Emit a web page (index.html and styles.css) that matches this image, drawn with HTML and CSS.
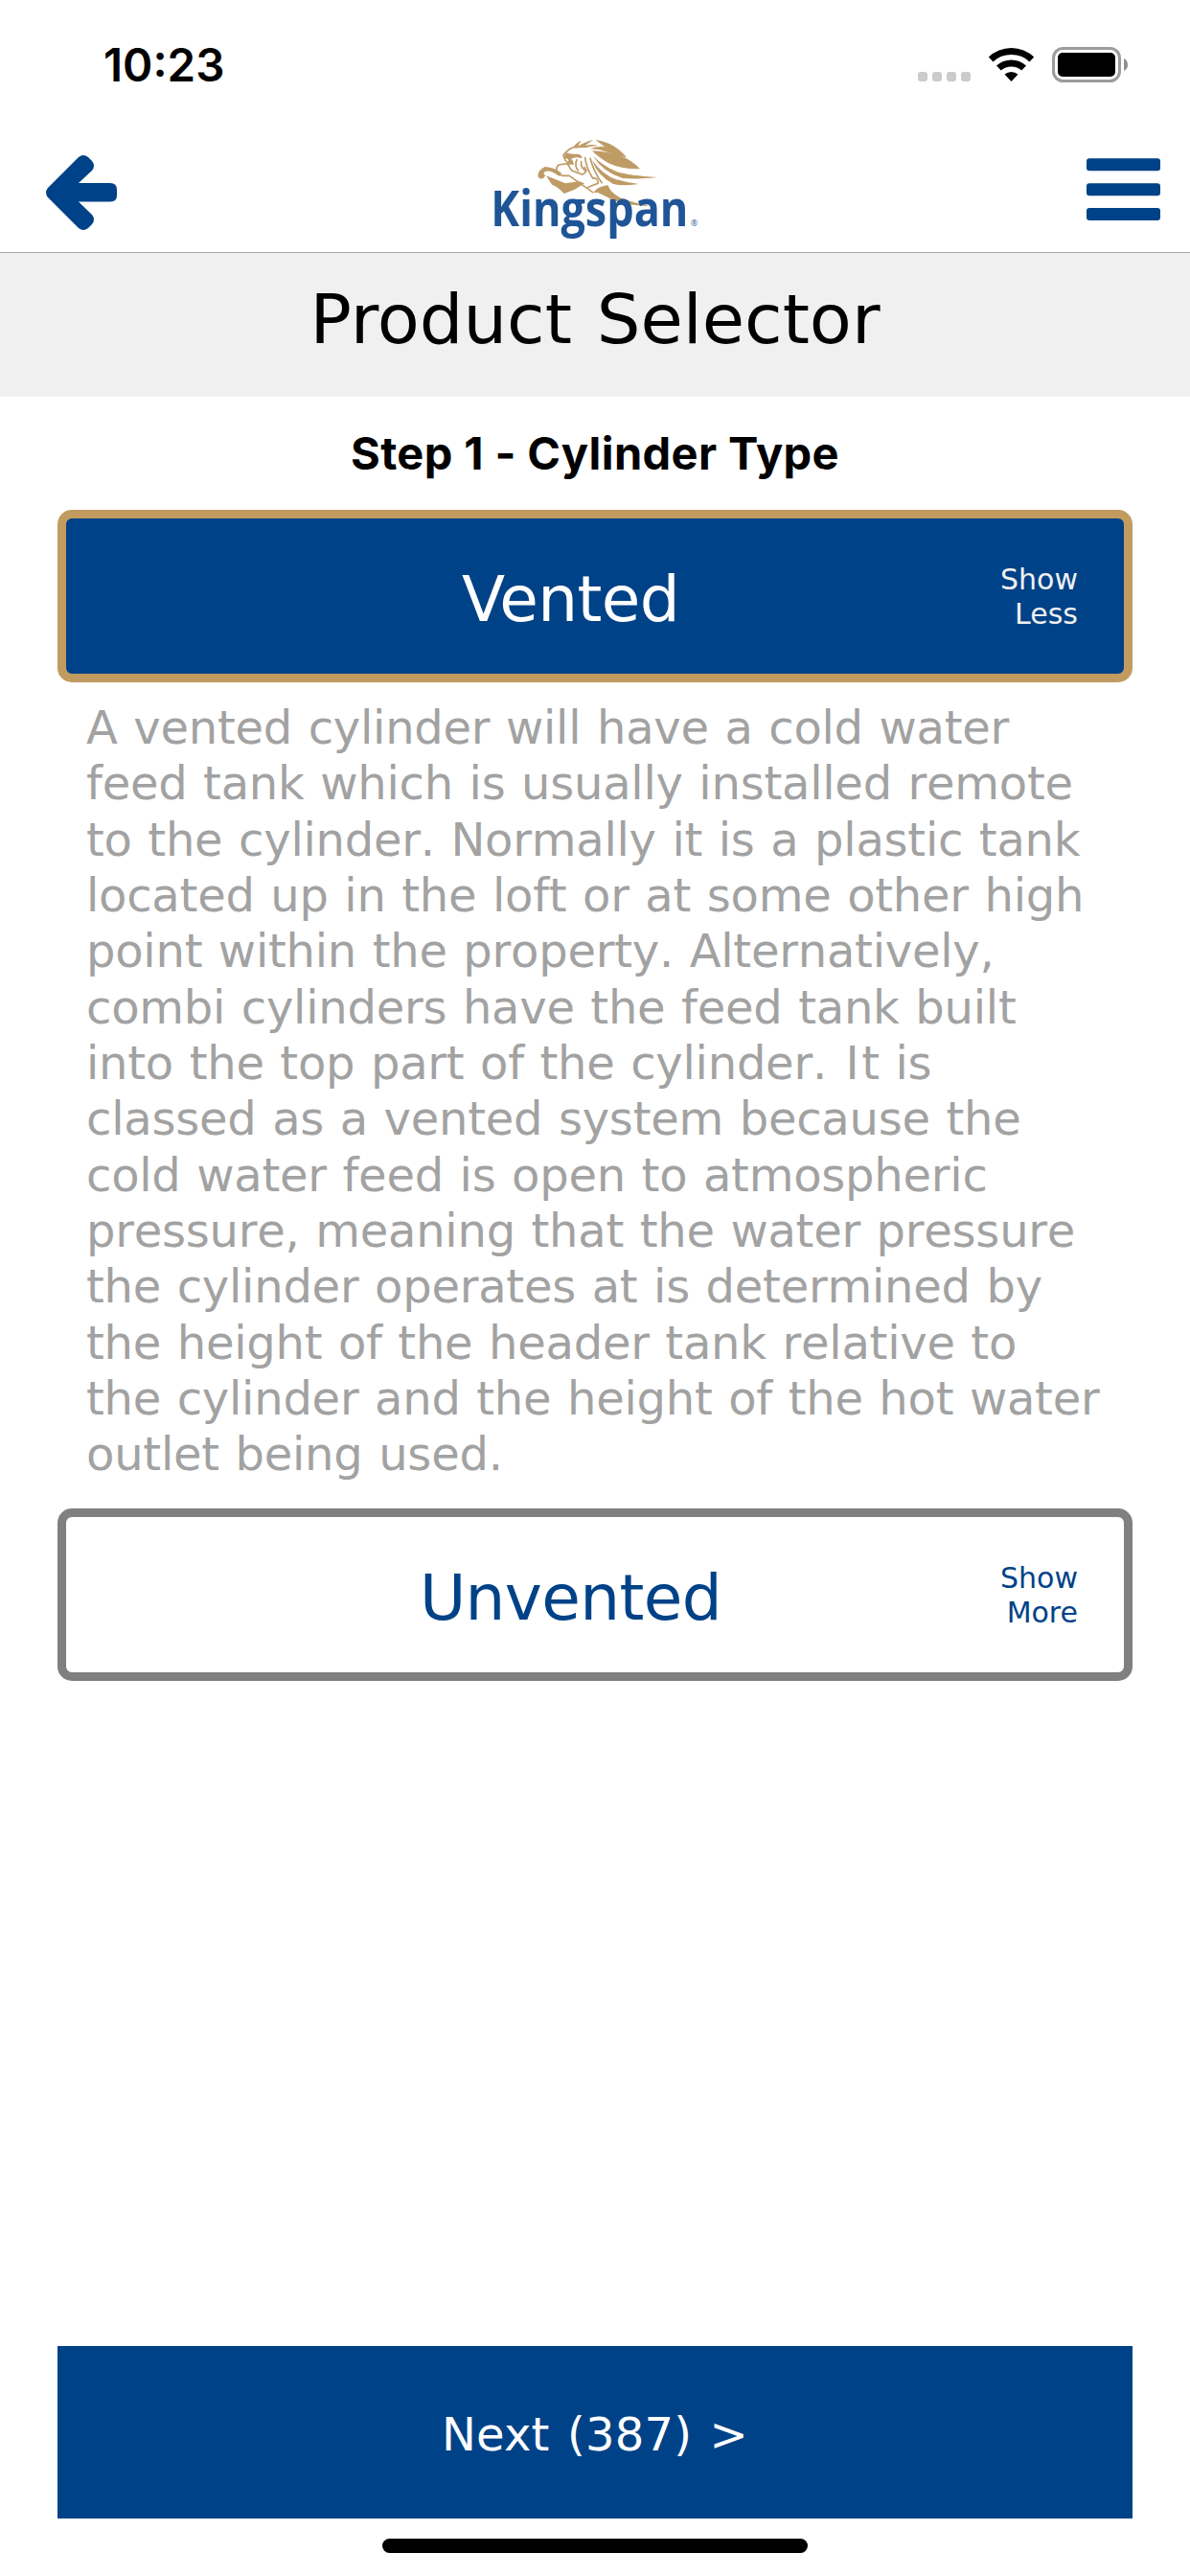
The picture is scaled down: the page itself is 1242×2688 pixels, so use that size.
FILE: index.html
```
<!DOCTYPE html>
<html lang="en">

<head>
    <meta charset="utf-8" />
    <title>Product Selector</title>
    <link rel="stylesheet" href="styles.css">
</head>

<body>
    <div class="status">
        <span class="time">10:23</span>
        <svg class="status-icons" width="220" height="40" viewBox="958 48 220 40">
            <g fill="#cbcbcb">
                <rect x="958" y="75" width="10" height="10" rx="3" />
                <rect x="973" y="75" width="10" height="10" rx="3" />
                <rect x="988" y="75" width="10" height="10" rx="3" />
                <rect x="1003" y="75" width="10" height="10" rx="3" />
            </g>
            <path d="M1031.800 59.500A34 34 0 0 1 1079.200 59.500L1074.500 64.500A27.500 27.500 0 0 0 1036.500 64.500ZM1040 68.500A23 23 0 0 1 1071 68.500L1066.200 73.500A16 16 0 0 0 1044.800 73.500ZM1048.500 77.500A11 11 0 0 1 1062.500 77.500L1055.500 85Z" />
            <rect x="1099.500" y="50.500" width="69" height="34" rx="10" fill="none" stroke="#9c9c9c" stroke-width="3" />
            <rect x="1104" y="55" width="60" height="25" rx="5" />
            <path d="M1173 61Q1177 63 1177 67.500T1173 74Z" fill="#8e8e8e" />
        </svg>
    </div>

    <div class="header">
        <svg class="back" width="76" height="80" viewBox="0 0 76 80">
            <path d="M2 35L34 3Q39 -1 44 3L48 7Q52 12 48 17L34 30H67Q74 30 74 37V43Q74 49.500 67 49.500H34L48 63Q52 68 48 73L44 77Q39 81 34 77L2 45Q-2 40 2 35Z" />
        </svg>
        <svg class="logo" width="260" height="130" viewBox="0 0 780 390">
            <!-- mane -->
            <g fill="#bf9b66">
                <path d="M322 74Q334 56 350 50Q342 62 340 68Q356 56 388 47Q372 58 362 66Q385 60 402 66Q380 68 366 72Q345 72 322 74Z" />
                <path d="M394 48Q455 56 492 103Q462 98 432 86Q405 76 378 76Q400 66 424 70Q408 58 394 48Z" />
                <path d="M384 82Q430 84 470 96Q510 112 534 139Q475 140 434 120Q400 100 384 82Z" />
                <path d="M386 98Q420 130 462 148Q500 160 588 165Q520 172 480 168Q420 150 386 98Z" />
                <path d="M384 112Q420 160 460 172Q495 182 530 186Q480 194 450 186Q400 160 384 112Z" />
                <path d="M388 214Q398 194 434 190Q440 212 470 228Q510 244 568 256Q500 254 450 238Q425 222 400 212Z" />
                <path d="M216 166Q208 146 236 132Q268 134 288 152L282 162Q256 142 240 146Q226 150 238 160Q228 176 216 166Z" />
                <path d="M240 160L300 184L344 178L360 184L328 204L296 216Q280 196 258 188Z" />
                <path d="M298 96L304 88Q320 94 340 92Q354 96 352 106Q330 98 318 108Q326 112 326 126Q318 128 308 118Q316 106 296 106Z" />
            </g>
            <!-- outlines of the head, chest and paws -->
            <g fill="none" stroke="#bf9b66" stroke-width="5" stroke-linecap="round">
                <path d="M322 72Q300 84 294 97L300 112L314 124" />
                <path d="M276 150Q268 134 280 126L306 122L320 144L354 156Q372 148 360 134M276 150L290 160L312 160L386 212" />
                <path d="M336 110Q328 130 340 144M350 116Q346 134 366 146M362 104Q366 138 386 168M378 106Q390 150 414 182" />
                <path d="M386 168Q404 166 402 184L372 196" />
            </g>
            <text class="brand" x="67" y="319" textLength="618" lengthAdjust="spacingAndGlyphs">Kingspan</text>
            <text class="mark" x="693" y="318">®</text>
        </svg>
        <svg class="menu" width="77" height="65" viewBox="0 0 77 65">
            <rect y="0.300" width="77" height="13" rx="3" />
            <rect y="26.300" width="77" height="13" rx="3" />
            <rect y="52" width="77" height="13" rx="3" />
        </svg>
    </div>

    <h1 class="title">Product Selector</h1>

    <div class="content">
        <h2 class="step">Step 1 - Cylinder Type</h2>

        <div class="option selected">
            <span class="name">Vented</span>
            <span class="toggle">Show<br>Less</span>
        </div>
        <p class="description">
            A vented cylinder will have a cold water<br>
            feed tank which is usually installed remote<br>
            to the cylinder. Normally it is a plastic tank<br>
            located up in the loft or at some other high<br>
            point within the property. Alternatively,<br>
            combi cylinders have the feed tank built<br>
            into the top part of the cylinder. <span class="cap">I</span>t is<br>
            classed as a vented system because the<br>
            cold water feed is open to atmospheric<br>
            pressure, meaning that the water pressure<br>
            the cylinder operates at is determined by<br>
            the height of the header tank relative to<br>
            the cylinder and the height of the hot water<br>
            outlet being used.
        </p>
        <div class="option">
            <span class="name">Unvented</span>
            <span class="toggle">Show<br>More</span>
        </div>

        <div class="next">Next (387) &gt;</div>
    </div>
    <div class="home-bar"></div>
</body>

</html>
```
FILE: styles.css
```
* {
    box-sizing: border-box;
}

body {
    margin: 0;
    height: 2688px;
    display: flex;
    flex-direction: column;
    background: #fff;
    font-family: "DejaVu Sans", Verdana, sans-serif;
    overflow: hidden;
}

.status {
    height: 132px;
    display: flex;
    justify-content: space-between;
    padding: 48px 64px 0 108px;
}

.time {
    font: 600 47.500px/40px Inter, sans-serif;
}

.header {
    height: 132px;
    display: flex;
    justify-content: space-between;
    border-bottom: 1px solid #a7a7aa;
    padding: 0 31px 0 48px;
}

.back {
    margin-top: 29px;
    fill: #004287;
}

.logo {
    margin-top: -2px;
    margin-left: -18px;
}

.brand {
    font: 700 154px "Open Sans", sans-serif;
    fill: #1f5597;
}

.mark {
    font: 26px "Open Sans", sans-serif;
    fill: #1f5597;
}

.menu {
    margin-top: 33px;
    fill: #004287;
}

.title {
    margin: 0;
    height: 150px;
    background: #f0f0f0;
    font-size: 72px;
    font-weight: normal;
    line-height: 138px;
    word-spacing: 3px;
    text-align: center;
}

.content {
    flex: 1;
    display: flex;
    flex-direction: column;
    padding: 0 60px;
}

.step {
    margin: 0;
    height: 118px;
    font: 700 47px/118px Inter, sans-serif;
    letter-spacing: .4px;
    text-align: center;
}

.option {
    height: 180px;
    display: flex;
    align-items: center;
    border: 9px solid #808080;
    border-radius: 15px;
    color: #004287;
    padding-right: 48px;
}

.selected {
    background: #004287;
    border-color: #c19b60;
    color: #fff;
}

.name {
    flex: 1;
    padding: 6px 0 0 78px;
    font-size: 66px;
    letter-spacing: -.6px;
    text-align: center;
}

.toggle {
    padding-top: 2px;
    font-size: 30px;
    line-height: 36.400px;
    text-align: right;
}

.selected .toggle {
    color: #f0f0f0;
}

.description {
    margin: 0;
    height: 862px;
    padding: 18px 0 0 30px;
    font-size: 48px;
    font-kerning: none;
    line-height: 58.330px;
    letter-spacing: -.005em;
    word-spacing: .034em;
    color: #a2a2a2;
    white-space: nowrap;
}

.cap {
    padding: 0 .06em;
}

.next {
    height: 180px;
    margin-top: auto;
    background: #004287;
    color: #fff;
    font-size: 48px;
    line-height: 184px;
    letter-spacing: .2px;
    word-spacing: 3px;
    text-align: center;
}

.home-bar {
    width: 444px;
    height: 15px;
    margin: 21px auto 24px;
    border-radius: 8px;
    background: #000;
}
```
